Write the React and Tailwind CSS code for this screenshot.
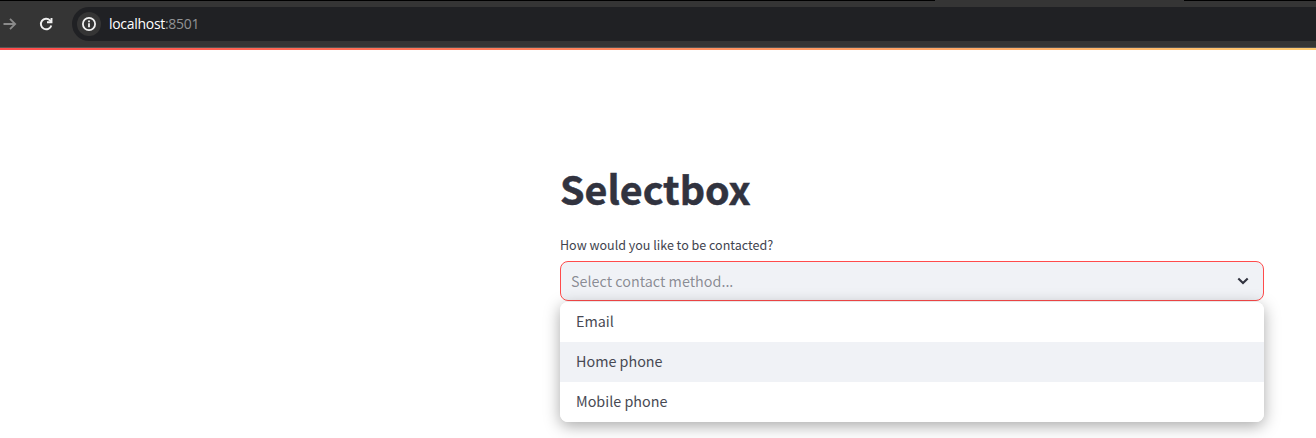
const options = ["Email", "Home phone", "Mobile phone"];

function BrowserBar() {
  return (
    <header className="flex h-12 flex-col bg-[#353535]">
      <div className="flex h-px shrink-0">
        <div className="h-px w-[935px] bg-black" />
        <div className="h-px w-[249px] bg-[#353535]" />
        <div className="h-px flex-1 bg-black" />
      </div>
      <div className="flex h-[46px] shrink-0 items-center">
        <svg className="ml-[3px] h-4 w-4 shrink-0" viewBox="0 0 16 16" fill="none" stroke="#8a8a8a" strokeWidth="1.8">
          <path d="M0.5 8h11.5M7 2.8L12.2 8L7 13.2" />
        </svg>
        <svg className="ml-[19px] h-4 w-4 shrink-0" viewBox="0 0 16 16" fill="none" stroke="#f1f1f1" strokeWidth="1.9">
          <path d="M13.3 9.4A5.3 5.3 0 1 1 12 4.3L13.4 5.7" />
          <path d="M13.5 2V6.3H9" />
        </svg>
        <div className="ml-[18px] flex h-[34px] flex-1 items-center rounded-l-full bg-[#202124] pl-[5px]">
          <div className="flex h-6 w-6 items-center justify-center rounded-full bg-[#353535]">
            <svg className="h-4 w-4" viewBox="0 0 16 16" fill="none" stroke="#f1f1f1" strokeWidth="1.8">
              <circle cx="8" cy="8" r="6.1" />
              <path d="M8 7.2v4M8 4.5v1.7" />
            </svg>
          </div>
          <span className="ml-2 font-['Open_Sans',sans-serif] text-[14px] leading-5 tracking-[-0.3px] text-white">
            localhost<span className="text-[#919395]">:8501</span>
          </span>
        </div>
      </div>
      <div className="h-px bg-[#555555]" />
    </header>
  );
}

export default function App() {
  return (
    <div className="h-[438px] overflow-hidden bg-white font-['Noto_Sans_CJK_SC',sans-serif] text-[#31333f]">
      <BrowserBar />
      <div className="h-0.5 w-[1824px] bg-[linear-gradient(90deg,#ff4b4b,#fffd80)]" />
      <main className="ml-[560px] w-[704px] pt-[111px]">
        <h1 className="h-[53px] text-[39.4px] leading-[53px] font-bold [-webkit-text-stroke:0.5px_#31333f]">Selectbox</h1>
        <label className="mt-[21px] block h-[20px] text-[12.53px] leading-[20px] text-[#41434e]">How would you like to be contacted?</label>
        <div className="mt-[6px] flex h-10 items-center justify-between rounded-lg border border-[#ff4b4b] bg-[#f0f2f6] pr-3 pl-[10px]">
          <span className="text-[14.35px] leading-6 text-[#31333f]/55">Select contact method...</span>
          <svg className="h-4 w-4" viewBox="0 0 16 16" fill="none" stroke="#31333f" strokeWidth="2.1">
            <path d="M3.3 5.5L8 10l4.7-4.5" />
          </svg>
        </div>
        <ul className="relative mt-px overflow-hidden rounded-lg bg-white shadow-[0_4px_16px_rgba(0,0,0,0.34)]">
          {options.map((option) => (
            <li
              key={option}
              className={`flex h-10 items-center px-4 pb-0.5 text-[14.35px] leading-6 text-[#474953] ${option === "Home phone" ? "bg-[#f0f2f6]" : "bg-white"}`}
            >
              {option}
            </li>
          ))}
        </ul>
      </main>
    </div>
  );
}
